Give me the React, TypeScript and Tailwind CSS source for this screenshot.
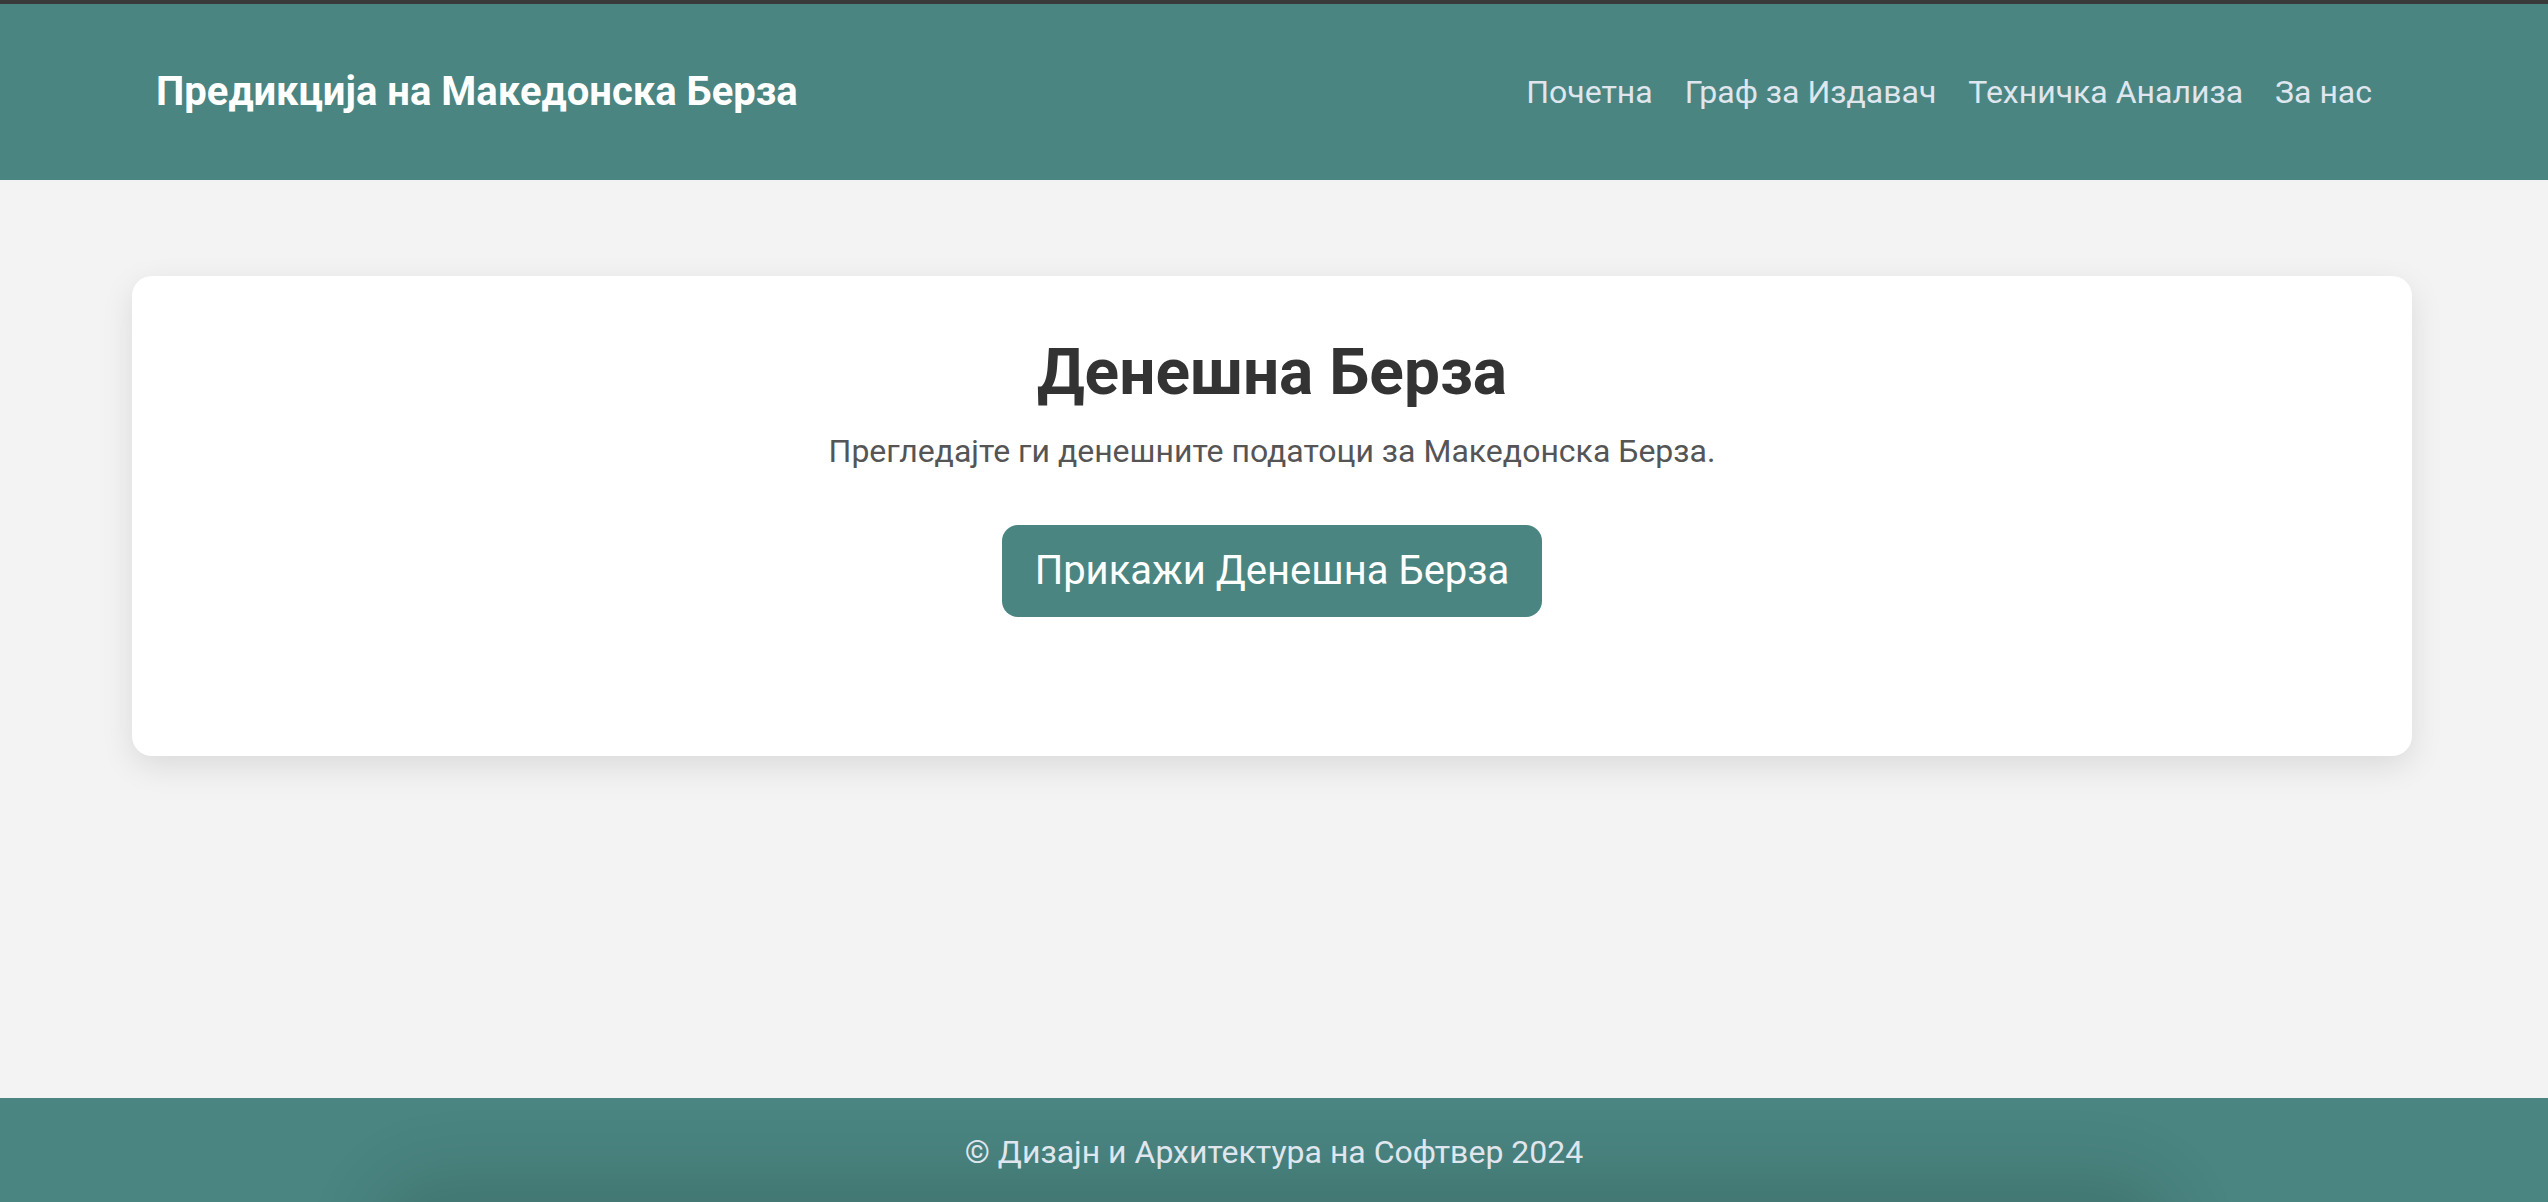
export default function App() {
  return (
    <div className="flex min-h-screen flex-col bg-[#f3f3f3] font-['Roboto','Noto_Sans',sans-serif]">
      <div className="h-[4px] bg-[#3a3a3a]" />
      <header className="flex h-[176px] items-center justify-between bg-[#4a8581] pl-[156px] pr-[176px]">
        <h1 className="text-[40px] font-bold text-white">Предикција на Македонска Берза</h1>
        <nav className="flex items-center gap-[32px] text-[32px] text-[#dfe6ee]">
          <a>Почетна</a>
          <a>Граф за Издавач</a>
          <a>Техничка Анализа</a>
          <a>За нас</a>
        </nav>
      </header>

      <main className="flex-1 pl-[132px] pr-[136px] pt-[96px]">
        <section className="flex h-[480px] flex-col items-center rounded-[20px] bg-white pt-[59px] shadow-[0_10px_32px_rgba(0,0,0,0.1)]">
          <h2 className="text-[64px] leading-[76px] font-bold text-[#333333]">Денешна Берза</h2>
          <p className="mt-[22px] text-[32px] leading-[37px] text-[#555555]">
            Прегледајте ги денешните податоци за Македонска Берза.
          </p>
          <button className="mt-[55px] rounded-[16px] bg-[#4a8581] px-[33px] py-[20px] text-[40px] leading-[52px] text-white">
            Прикажи Денешна Берза
          </button>
        </section>
      </main>

      <footer className="relative flex h-[104px] items-center justify-center overflow-hidden bg-[#4a8581]">
        <p className="relative z-10 pt-[4px] text-[32px] text-[#dfe6ee]">© Дизајн и Архитектура на Софтвер 2024</p>
        <div className="absolute left-[400px] right-[400px] top-full h-[200px] rounded-[40px] shadow-[0_0_70px_30px_rgba(0,0,0,0.12)]" />
      </footer>
    </div>
  );
}
